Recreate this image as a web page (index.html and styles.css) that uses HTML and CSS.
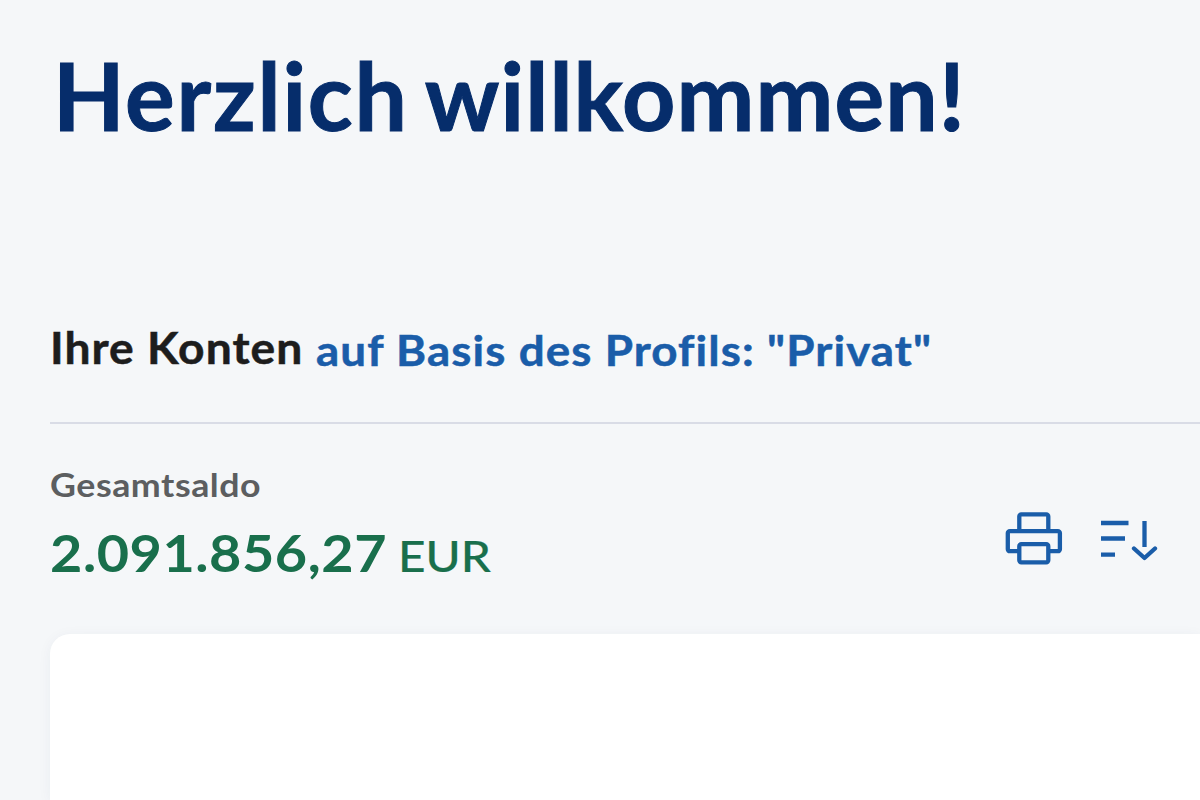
FILE: index.html
```html
<!DOCTYPE html>
<html lang="de">
<head>
    <meta charset="UTF-8">
    <title>Herzlich willkommen!</title>
    <link rel="stylesheet" href="styles.css">
</head>
<body>

<main class="page">
    <h1 class="welcome"><span class="welcome-first">Herzlich</span> <span class="welcome-second">willkommen!</span></h1>

    <div class="accounts-header">
        <h2 class="accounts-title">Ihre Konten</h2>
        <a class="profile-link">auf Basis des Profils: "Privat"</a>
    </div>

    <div class="summary">
        <div class="balance">
            <div class="balance-label">Gesamtsaldo</div>
            <div class="balance-value"><span class="amount">2.091.856,27</span><span class="currency">EUR</span></div>
        </div>
        <div class="actions">
            <svg class="icon" width="58" height="54" viewBox="0 0 58 54">
                <path d="M14.300 20V5.400a2 2 0 0 1 2-2h25a2 2 0 0 1 2 2V20"/>
                <path d="M14.300 40.200H4.800a2 2 0 0 1-2-2V22.100a2 2 0 0 1 2-2h48.100a2 2 0 0 1 2 2v16.100a2 2 0 0 1-2 2h-9.600"/>
                <rect x="14.300" y="33.200" width="29" height="18.100" rx="2"/>
            </svg>
            <svg class="icon" width="58" height="54" viewBox="0 -8 58 54">
                <path d="M1 4h27.500M1 19.500h24M1 35.600h14M44.500 2v26"/>
                <path d="M34 29.500l10.500 9.500 10.500-9.500" stroke-linecap="round" stroke-linejoin="round"/>
            </svg>
        </div>
    </div>

    <div class="card"></div>
</main>

</body>
</html>
```

FILE: styles.css
```css
body {
    font-family: Lato, 'Open Sans', sans-serif;
    margin: 0;
    background-color: #f5f7f9;
    overflow: hidden;
}

.page {
    display: flex;
    flex-direction: column;
    height: 800px;
    padding: 45px 0 0 50px;
    box-sizing: border-box;
}

.welcome {
    display: flex;
    gap: 16px;
    margin: 0;
    padding-left: 3px;
    font-size: 93px;
    line-height: 100px;
    font-weight: 700;
    color: #062d6b;
    white-space: nowrap;
    -webkit-text-stroke: 1px #062d6b;
}

.welcome-first {
    letter-spacing: 1.8px;
}

.welcome-second {
    letter-spacing: 1.1px;
}

.accounts-header {
    display: flex;
    gap: 30px;
    height: 102px;
    margin-top: 175px;
    border-bottom: 2px solid #d9dce6;
    white-space: nowrap;
}

.accounts-title,
.profile-link,
.balance-label,
.amount,
.currency {
    transform-origin: left;
}

.accounts-title {
    margin: 0;
    padding-top: 1px;
    font-size: 43px;
    line-height: 54px;
    font-weight: 700;
    letter-spacing: 1px;
    color: #1d1d1d;
    transform: scaleX(1.073);
    -webkit-text-stroke: 0.5px #1d1d1d;
}

.profile-link {
    padding-top: 3px;
    font-size: 42px;
    line-height: 54px;
    font-weight: 700;
    letter-spacing: 1px;
    color: #1a5da9;
    transform: scaleX(1.09);
    -webkit-text-stroke: 0.5px #1a5da9;
}

.summary {
    display: flex;
    justify-content: space-between;
    height: 210px;
    padding-right: 42px;
}

.balance-label {
    margin-top: 38px;
    font-size: 33px;
    line-height: 44px;
    font-weight: 700;
    letter-spacing: 0.5px;
    color: #5c5e60;
    transform: scaleX(1.083);
}

.balance-value {
    display: flex;
    align-items: baseline;
    gap: 40px;
    margin-top: 15px;
    line-height: 64px;
    color: #196f4c;
}

.amount {
    font-size: 51px;
    font-weight: 700;
    letter-spacing: 0.5px;
    transform: scaleX(1.093);
}

.currency {
    font-size: 43px;
    font-weight: 500;
    transform: scaleX(1.11);
    -webkit-text-stroke: 0.2px #196f4c;
}

.actions {
    display: flex;
    gap: 37px;
    margin-top: 87px;
}

.icon {
    fill: none;
    stroke: #1a5da9;
    stroke-width: 4.3;
}

.card {
    flex: 1;
    background-color: #fff;
    border-radius: 20px 0 0 0;
    box-shadow: 0 2px 14px rgba(40, 60, 90, 0.05);
}
```
